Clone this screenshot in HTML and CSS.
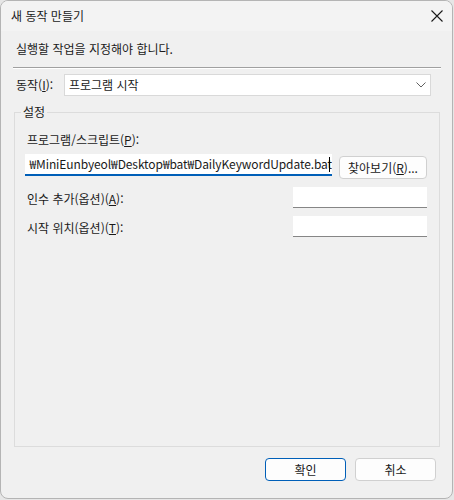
FILE: index.html
```html
<!DOCTYPE html>
<html lang="ko">
    <head>
        <meta charset="UTF-8" />
        <title>새 동작 만들기</title>
        <link rel="stylesheet" href="styles.css">
    </head>
    <body>
        <div class="janela">
            <div class="titulo">
                <span class="titulo-texto">새 동작 만들기</span>
                <span class="fechar">
                    <svg width="12" height="12" viewBox="0 0 12 12">
                        <path d="M0.5 0.5 L11.5 11.5 M11.5 0.5 L0.5 11.5" stroke="#1a1a1a" stroke-width="1.1" fill="none"/>
                    </svg>
                </span>
            </div>
            <div class="conteudo">
                <div class="instrucao">실행할 작업을 지정해야 합니다.</div>
                <div class="separador"></div>

                <div class="linha-acao">
                    <span class="rotulo-acao">동작(<u>I</u>):</span>
                    <div class="combo">
                        <span>프로그램 시작</span>
                        <svg class="seta" width="10" height="6" viewBox="0 0 10 6">
                            <path d="M0.5 0.5 L5 5 L9.5 0.5" stroke="#606060" stroke-width="1" fill="none"/>
                        </svg>
                    </div>
                </div>

                <div class="grupo">
                    <span class="legenda">설정</span>
                    <div class="rotulo">프로그램/스크립트(<u>P</u>):</div>
                    <div class="linha-programa">
                        <div class="campo-programa">
                            <span class="caminho">₩MiniEunbyeol₩Desktop₩bat₩DailyKeywordUpdate.bat</span><span class="cursor"></span>
                        </div>
                        <button class="botao botao-procurar">찾아보기(<u>R</u>)...</button>
                    </div>
                    <div class="linha-opcao">
                        <span class="rotulo">인수 추가(옵션)(<u>A</u>):</span>
                        <div class="campo"></div>
                    </div>
                    <div class="linha-opcao">
                        <span class="rotulo">시작 위치(옵션)(<u>T</u>):</span>
                        <div class="campo"></div>
                    </div>
                </div>

                <div class="rodape">
                    <button class="botao botao-ok">확인</button>
                    <button class="botao">취소</button>
                </div>
            </div>
        </div>
    </body>
</html>
```

FILE: styles.css
```css
body{
    margin: 0;
    padding: 0;
    background-color: #e6e6e6;
    font-family: "Noto Sans CJK KR", "Noto Sans", sans-serif;
    font-size: 12px;
    color: #1a1a1a;
}

.janela{
    width: 451px;
    height: 497px;
    background-color: #f0f0f0;
    border: 1px solid #b4b4b4;
    border-radius: 8px;
    overflow: hidden;
}

.titulo{
    height: 30px;
    background-color: #f3f3f3;
    display: flex;
    align-items: center;
    justify-content: space-between;
}
.titulo-texto{
    margin-left: 10px;
    line-height: 16px;
}
.fechar{
    display: flex;
    margin-right: 9px;
}

.conteudo{
    padding: 0 11px 0 12px;
}

.instrucao{
    margin-top: 10px;
    margin-left: 3px;
    line-height: 16px;
}

.separador{
    margin-top: 10px;
    height: 1px;
    background-color: #a0a0a0;
    border-bottom: 1px solid #ffffff;
}

.linha-acao{
    display: flex;
    align-items: center;
    margin-top: 5px;
    margin-right: 10px;
}
.rotulo-acao{
    width: 48px;
    margin-left: 3px;
    line-height: 16px;
}
.combo{
    flex: 1;
    height: 20px;
    background-color: #ffffff;
    border: 1px solid #d9d9d9;
    display: flex;
    align-items: center;
    justify-content: space-between;
    padding: 0 4px 0 4px;
}
.combo span{
    line-height: 16px;
}

.grupo{
    position: relative;
    box-sizing: border-box;
    margin: 16px 1px 0 1px;
    height: 335px;
    border: 1px solid #dcdcdc;
    padding: 19px 12px 0 12px;
}
.legenda{
    position: absolute;
    top: -9px;
    left: 6px;
    padding: 0 2px;
    background-color: #f0f0f0;
    line-height: 16px;
}

.rotulo{
    line-height: 16px;
}

.linha-programa{
    display: flex;
    align-items: flex-start;
    margin-top: 6px;
}
.campo-programa{
    width: 305px;
    height: 20px;
    margin-left: -2px;
    background-color: #ffffff;
    border-bottom: 2px solid #005fb8;
    display: flex;
    justify-content: flex-end;
    align-items: center;
    overflow: hidden;
    white-space: nowrap;
    padding-left: 2px;
}
.caminho{
    line-height: 16px;
    letter-spacing: -0.1px;
}
.cursor{
    flex: none;
    width: 1px;
    height: 15px;
    margin-left: -3px;
    margin-right: 2px;
    background-color: #000000;
}

.botao{
    font-family: "Noto Sans CJK KR", "Noto Sans", sans-serif;
    font-size: 12px;
    color: #1a1a1a;
    height: 23px;
    width: 81px;
    padding: 0;
    background-color: #fdfdfd;
    border: 1px solid #d0d0d0;
    border-radius: 4px;
}
.botao-procurar{
    margin-top: 2px;
    margin-left: 7px;
    width: 88px;
}

.linha-opcao{
    display: flex;
    align-items: center;
    justify-content: space-between;
    margin-top: 8px;
}
.linha-opcao .rotulo{
    margin-top: 3px;
}
.campo{
    width: 134px;
    height: 20px;
    background-color: #ffffff;
    border-bottom: 1px solid #868686;
}

.rodape{
    display: flex;
    justify-content: flex-end;
    gap: 9px;
    margin-top: 11px;
    margin-right: 5px;
}
.botao-ok{
    border: 1px solid #005fb8;
}
```
